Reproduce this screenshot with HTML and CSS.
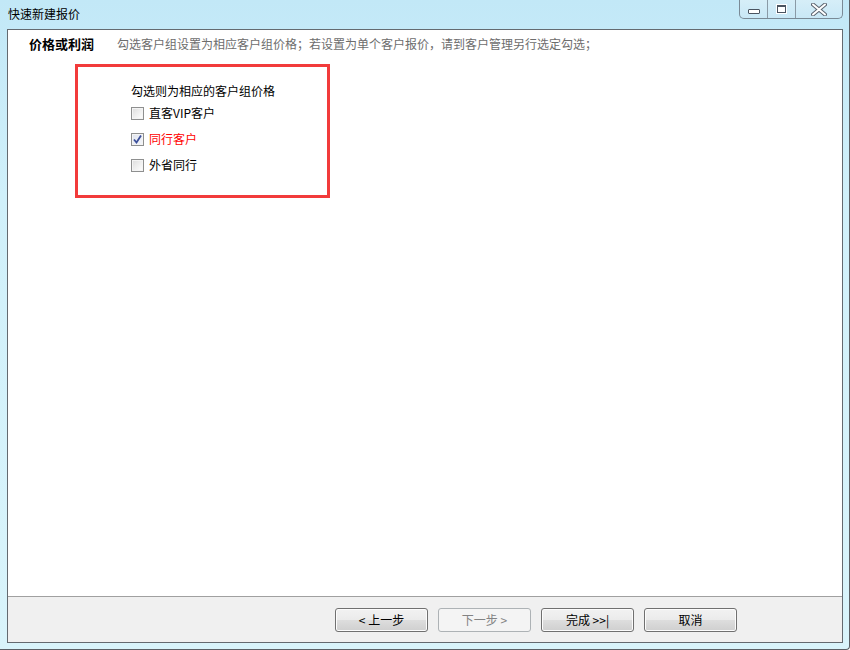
FILE: index.html
```html
<!DOCTYPE html>
<html lang="zh">
<head>
<meta charset="utf-8">
<title>快速新建报价</title>
<link rel="stylesheet" href="styles.css">
</head>
<body>
<div class="window">
  <div class="titlebar">
    <div class="title">快速新建报价</div>
    <div class="caption">
      <div class="cap cap-min"><span class="min-ico"></span></div>
      <div class="cap cap-max"><span class="max-ico"></span></div>
      <div class="cap cap-close">
        <svg width="16" height="13" viewBox="0 0 16 13">
          <path d="M2 1.5 L14 11.5 M14 1.5 L2 11.5" stroke="#5b6470" stroke-width="4" stroke-linecap="round"/>
          <path d="M2 1.5 L14 11.5 M14 1.5 L2 11.5" stroke="#ffffff" stroke-width="2" stroke-linecap="round"/>
        </svg>
      </div>
    </div>
  </div>
  <div class="client">
    <div class="content">
      <div class="header">
        <div class="h-title">价格或利润</div>
        <div class="h-desc">勾选客户组设置为相应客户组价格；若设置为单个客户报价，请到客户管理另行选定勾选；</div>
      </div>
      <div class="groupbox">
        <div class="gb-label">勾选则为相应的客户组价格</div>
        <div class="opt"><span class="cb"></span><span class="opt-text">直客VIP客户</span></div>
        <div class="opt"><span class="cb checked"><svg width="11" height="11" viewBox="0 0 11 11"><path d="M2 5.5 L4.5 8.5 L9 1.5" fill="none" stroke="#3b4f9a" stroke-width="1.8"/></svg></span><span class="opt-text red">同行客户</span></div>
        <div class="opt"><span class="cb"></span><span class="opt-text">外省同行</span></div>
      </div>
    </div>
    <div class="buttonbar">
      <button class="btn">&lt; 上一步</button>
      <button class="btn disabled">下一步 &gt;</button>
      <button class="btn">完成 &gt;&gt;|</button>
      <button class="btn">取消</button>
    </div>
  </div>
</div>
</body>
</html>
```

FILE: styles.css
```css
html, body {
  margin: 0;
  padding: 0;
  background: #ffffff;
}

body {
  font-family: "Noto Sans CJK SC", "Liberation Sans", sans-serif;
  font-size: 12px;
  color: #000;
}

.window {
  width: 850px;
  height: 650px;
  box-sizing: border-box;
  background: linear-gradient(180deg, #c2e8f7 0%, #d0f0fa 30%, #d9f4fb 100%);
  border-right: 1px solid #5c6066;
  border-bottom: 1px solid #5c6066;
  border-bottom-right-radius: 4px;
  display: flex;
  flex-direction: column;
}

.titlebar {
  height: 29px;
  display: flex;
  align-items: flex-start;
  flex-shrink: 0;
}

.title {
  padding-left: 8px;
  padding-top: 5px;
  line-height: 18px;
  font-size: 12px;
  color: #000;
}

.caption {
  margin-left: auto;
  margin-right: 6px;
  display: flex;
  height: 19px;
  border: 1px solid #7a8a96;
  border-top: none;
  border-radius: 0 0 5px 5px;
  background: linear-gradient(180deg, #d6eef8 0%, #c9e8f6 100%);
  box-sizing: border-box;
}

.cap {
  display: flex;
  align-items: center;
  justify-content: center;
  height: 18px;
}

.cap-min {
  width: 27px;
  border-right: 1px solid #8a9aa6;
}

.cap-max {
  width: 27px;
  border-right: 1px solid #8a9aa6;
}

.cap-close {
  width: 46px;
}

.min-ico {
  display: block;
  width: 10px;
  height: 3px;
  margin-top: 5px;
  border: 1px solid #4b5460;
  background: #fff;
  border-radius: 1px;
}

.max-ico {
  display: block;
  width: 7px;
  height: 5px;
  border: 1px solid #4b5460;
  border-top-width: 2px;
  background: #fff;
  outline: 1px solid #fff;
}

.client {
  flex: 1;
  margin: 0 6px 6px 7px;
  border: 1px solid #646a70;
  display: flex;
  flex-direction: column;
  background: #fff;
}

.content {
  flex: 1;
  background: #fff;
  border-bottom: 1px solid #a0a0a0;
}

.header {
  display: flex;
  align-items: center;
  height: 26px;
}

.h-title {
  width: 88px;
  padding-left: 21px;
  font-size: 13px;
  font-weight: bold;
  color: #000;
}

.h-desc {
  color: #6d6d6d;
  font-size: 12px;
}

.groupbox {
  margin-left: 67px;
  margin-top: 8px;
  width: 249px;
  height: 128px;
  border: 3px solid #f23b3b;
}

.gb-label {
  margin-left: 53px;
  margin-top: 15px;
  line-height: 18px;
  height: 18px;
}

.opt {
  display: flex;
  align-items: center;
  margin-left: 53px;
  height: 26px;
}

.cb {
  width: 11px;
  height: 11px;
  border: 1px solid #8e8f8f;
  background: linear-gradient(135deg, #dcdcdc 0%, #f2f2f2 60%, #ffffff 100%);
  box-shadow: inset 0 0 0 1px #f4f4f4;
  display: flex;
  align-items: center;
  justify-content: center;
  flex-shrink: 0;
}

.cb.checked {
  background: linear-gradient(135deg, #e0e4ee 0%, #f4f6fa 100%);
}

.opt-text {
  margin-left: 5px;
  line-height: 18px;
}

.red {
  color: #ff0000;
}

.buttonbar {
  height: 45px;
  background: #f0f0f0;
  display: flex;
  justify-content: flex-end;
  align-items: flex-start;
  gap: 10px;
  padding-right: 105px;
  padding-top: 11px;
  box-sizing: border-box;
  flex-shrink: 0;
}

.btn {
  width: 93px;
  height: 24px;
  border: 1px solid #707070;
  border-radius: 3px;
  background: linear-gradient(180deg, #f2f2f2 0%, #ebebeb 48%, #dddddd 52%, #cfcfcf 100%);
  box-shadow: inset 0 0 0 1px #fcfcfc;
  font-family: "Noto Sans CJK SC", "Liberation Sans", sans-serif;
  font-size: 12px;
  color: #000;
  padding: 0;
  line-height: 20px;
}

.btn.disabled {
  border-color: #adb2b5;
  background: #f4f4f4;
  box-shadow: none;
  color: #838383;
}
```
